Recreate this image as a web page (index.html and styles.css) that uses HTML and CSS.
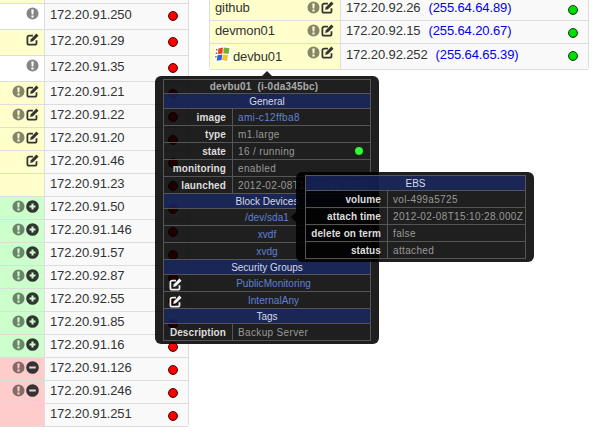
FILE: index.html
```html
<!DOCTYPE html>
<html lang="en">
<head>
    <meta charset="UTF-8">
    <title>Instances</title>
    <link rel="stylesheet" href="styles.css">
</head>
<body>
    <!-- Icon set -->
    <svg class="defs" width="0" height="0">
        <symbol id="i-excl" viewBox="0 0 14 14"><path fill-rule="evenodd" d="M7 .5a6.5 6.5 0 1 0 0 13a6.5 6.5 0 1 0 0-13z M5.7 2.8h2.6l-.4 5.4H6.100z M5.800 9.200h2.400v2.200H5.800z"/></symbol>
        <symbol id="i-plus" viewBox="0 0 14 14"><path fill-rule="evenodd" d="M7 .2a6.800 6.800 0 1 0 0 13.600a6.800 6.800 0 1 0 0-13.600z M5.900 3.800h2.200v2.100h2.100v2.200H8.100v2.100H5.900V8.100H3.800V5.900h2.100z"/></symbol>
        <symbol id="i-minus" viewBox="0 0 14 14"><path fill-rule="evenodd" d="M7 .2a6.800 6.800 0 1 0 0 13.600a6.800 6.800 0 1 0 0-13.600z M3.500 5.900h7v2.200h-7z"/></symbol>
        <symbol id="i-edit" viewBox="0 0 14 14"><path fill="none" stroke="currentColor" stroke-width="1.9" d="M7.500 2.900H3.400a1.900 1.900 0 0 0-1.900 1.900v5.900a1.900 1.900 0 0 0 1.900 1.900h6a1.900 1.900 0 0 0 1.900-1.900V7.800"/><path fill="currentColor" d="M11.200 .6l2.300 2.300-6 6-3.100.8.8-3.100z"/></symbol>
    </svg>

    <div class="page">
        <table class="list left-list">
            <tr class="cut"><td class="flag yellow"></td><td class="ip"></td></tr>
            <tr class="tall"><td class="flag"><svg class="ico grey"><use href="#i-excl"/></svg></td><td class="ip"><span class="dot red"></span>172.20.91.250</td></tr>
            <tr class="tall"><td class="flag yellow"><svg class="ico ink"><use href="#i-edit"/></svg></td><td class="ip"><span class="dot red"></span>172.20.91.29</td></tr>
            <tr class="tall"><td class="flag"><svg class="ico grey"><use href="#i-excl"/></svg></td><td class="ip"><span class="dot red"></span>172.20.91.35</td></tr>
            <tr><td class="flag yellow"><svg class="ico grey"><use href="#i-excl"/></svg><svg class="ico ink"><use href="#i-edit"/></svg></td><td class="ip"><span class="dot red"></span>172.20.91.21</td></tr>
            <tr><td class="flag yellow"><svg class="ico grey"><use href="#i-excl"/></svg><svg class="ico ink"><use href="#i-edit"/></svg></td><td class="ip"><span class="dot red"></span>172.20.91.22</td></tr>
            <tr><td class="flag yellow"><svg class="ico grey"><use href="#i-excl"/></svg><svg class="ico ink"><use href="#i-edit"/></svg></td><td class="ip"><span class="dot red"></span>172.20.91.20</td></tr>
            <tr><td class="flag yellow"><svg class="ico ink"><use href="#i-edit"/></svg></td><td class="ip"><span class="dot red"></span>172.20.91.46</td></tr>
            <tr><td class="flag yellow"></td><td class="ip"><span class="dot red"></span>172.20.91.23</td></tr>
            <tr><td class="flag green"><svg class="ico grey"><use href="#i-excl"/></svg><svg class="ico ink"><use href="#i-plus"/></svg></td><td class="ip"><span class="dot red"></span>172.20.91.50</td></tr>
            <tr><td class="flag green"><svg class="ico grey"><use href="#i-excl"/></svg><svg class="ico ink"><use href="#i-plus"/></svg></td><td class="ip"><span class="dot red"></span>172.20.91.146</td></tr>
            <tr><td class="flag green"><svg class="ico grey"><use href="#i-excl"/></svg><svg class="ico ink"><use href="#i-plus"/></svg></td><td class="ip"><span class="dot red"></span>172.20.91.57</td></tr>
            <tr><td class="flag green"><svg class="ico grey"><use href="#i-excl"/></svg><svg class="ico ink"><use href="#i-plus"/></svg></td><td class="ip"><span class="dot red"></span>172.20.92.87</td></tr>
            <tr><td class="flag green"><svg class="ico grey"><use href="#i-excl"/></svg><svg class="ico ink"><use href="#i-plus"/></svg></td><td class="ip"><span class="dot red"></span>172.20.92.55</td></tr>
            <tr><td class="flag green"><svg class="ico grey"><use href="#i-excl"/></svg><svg class="ico ink"><use href="#i-plus"/></svg></td><td class="ip"><span class="dot red"></span>172.20.91.85</td></tr>
            <tr><td class="flag green"><svg class="ico grey"><use href="#i-excl"/></svg><svg class="ico ink"><use href="#i-plus"/></svg></td><td class="ip"><span class="dot red"></span>172.20.91.16</td></tr>
            <tr><td class="flag pink"><svg class="ico grey"><use href="#i-excl"/></svg><svg class="ico ink"><use href="#i-minus"/></svg></td><td class="ip"><span class="dot red"></span>172.20.91.126</td></tr>
            <tr><td class="flag pink"><svg class="ico grey"><use href="#i-excl"/></svg><svg class="ico ink"><use href="#i-minus"/></svg></td><td class="ip"><span class="dot red"></span>172.20.91.246</td></tr>
            <tr><td class="flag pink"></td><td class="ip"><span class="dot red"></span>172.20.91.251</td></tr>
        </table>

        <table class="list right-list">
            <tr>
                <td class="name yellow"><span class="icons"><svg class="ico grey"><use href="#i-excl"/></svg><svg class="ico ink"><use href="#i-edit"/></svg></span>github</td>
                <td class="ip"><span class="dot lime"></span>172.20.92.26<a class="public">(255.64.64.89)</a></td>
            </tr>
            <tr>
                <td class="name yellow"><span class="icons"><svg class="ico grey"><use href="#i-excl"/></svg><svg class="ico ink"><use href="#i-edit"/></svg></span>devmon01</td>
                <td class="ip"><span class="dot lime"></span>172.20.92.15<a class="public">(255.64.20.67)</a></td>
            </tr>
            <tr class="tall">
                <td class="name yellow"><span class="icons"><svg class="ico grey"><use href="#i-excl"/></svg><svg class="ico ink"><use href="#i-edit"/></svg></span><svg class="winflag" viewBox="0 0 16 16"><rect width="16" height="16" fill="#fff"/><path fill="#e8451f" d="M3.500 2.500l4.500-1-.6 6-4.800.8z"/><path fill="#6cb32c" d="M8.900 1.500l5.600.8-1 5.800-5.300-.8z"/><path fill="#2d62d6" d="M2.500 9.200l4.700-.7-.6 5.500-4.900.8z"/><path fill="#f5c51e" d="M8 8.500l5 .6-1 5.900-5.200-1z"/><path fill="#555" d="M1.200 3h1.200l-.2 1.500H1zM.8 6.500H2l-.2 1.500H.6zM.4 10h1.200l-.2 1.500H.2z"/></svg><span class="host">devbu01</span></td>
                <td class="ip"><span class="dot lime"></span>172.20.92.252<a class="public">(255.64.65.39)</a></td>
            </tr>
        </table>
    </div>

    <!-- Instance popup -->
    <div class="tip tip-instance">
        <table class="tip-table">
            <colgroup><col class="key-col"><col></colgroup>
            <tr><td colspan="2" class="tip-title">devbu01 &nbsp;(i-0da345bc)</td></tr>
            <tr><th colspan="2">General</th></tr>
            <tr><td class="key">image</td><td class="val"><a>ami-c12ffba8</a></td></tr>
            <tr><td class="key">type</td><td class="val">m1.large</td></tr>
            <tr><td class="key">state</td><td class="val"><span class="state-dot"></span>16 / running</td></tr>
            <tr><td class="key">monitoring</td><td class="val">enabled</td></tr>
            <tr><td class="key">launched</td><td class="val">2012-02-08T15:09:53.000Z</td></tr>
            <tr><th colspan="2">Block Devices</th></tr>
            <tr><td colspan="2" class="mid"><a>/dev/sda1</a></td></tr>
            <tr><td colspan="2" class="mid"><a>xvdf</a></td></tr>
            <tr><td colspan="2" class="mid"><a>xvdg</a></td></tr>
            <tr><th colspan="2">Security Groups</th></tr>
            <tr><td colspan="2" class="mid"><svg class="ico light"><use href="#i-edit"/></svg><a>PublicMonitoring</a></td></tr>
            <tr><td colspan="2" class="mid"><svg class="ico light"><use href="#i-edit"/></svg><a>InternalAny</a></td></tr>
            <tr><th colspan="2">Tags</th></tr>
            <tr><td class="key">Description</td><td class="val">Backup Server</td></tr>
        </table>
    </div>

    <!-- Volume popup -->
    <div class="tip tip-volume">
        <table class="tip-table">
            <colgroup><col class="key-col-wide"><col></colgroup>
            <tr><th colspan="2">EBS</th></tr>
            <tr><td class="key">volume</td><td class="val">vol-499a5725</td></tr>
            <tr><td class="key">attach time</td><td class="val">2012-02-08T15:10:28.000Z</td></tr>
            <tr><td class="key">delete on term</td><td class="val">false</td></tr>
            <tr><td class="key">status</td><td class="val">attached</td></tr>
        </table>
    </div>
</body>
</html>
```

FILE: styles.css
```css
/* Page */
html, body {
    margin: 0;
    padding: 0;
    height: 437px;
    overflow: hidden;
    background-color: white;
}

body {
    font-family: "Liberation Sans", Arial, sans-serif;
    font-size: 13px;
    color: #333;
}

.defs {
    display: block;
}

.page {
    display: flex;
    align-items: flex-start;
    gap: 20px;
}

/* Instance lists */
.list {
    border-collapse: separate;
    border-spacing: 0;
    border-right: 1px solid #ddd;
    border-bottom-right-radius: 4px;
    table-layout: fixed;
    letter-spacing: -0.12px;
}

.list td {
    box-sizing: border-box;
    height: 23px;
    padding: 1px 0 0;
    border-bottom: 1px solid #ddd;
    vertical-align: top;
    line-height: 18px;
}

.list tr.tall td {
    height: 26px;
    padding-top: 2px;
}

.list tr.cut td {
    height: 4px;
    padding: 0;
    line-height: 0;
}

.left-list {
    width: 189px;
}

.right-list {
    width: 380px;
    margin-top: -2px;
    border-left: 1px solid #ddd;
    border-bottom-left-radius: 4px;
}

.flag {
    width: 45px;
    text-align: right;
    padding-right: 5px !important;
    border-right: 1px solid #ddd;
    white-space: nowrap;
}

.name {
    width: 131px;
    padding-left: 5px !important;
    padding-right: 6px !important;
    border-right: 1px solid #ddd;
    white-space: nowrap;
}

.icons {
    float: right;
}

.ip {
    background-color: #f9f9f9;
    padding-left: 5px !important;
    padding-right: 10px !important;
    white-space: nowrap;
}

.yellow {
    background-color: #ffffcc;
}

.green {
    background-color: #ccffcc;
}

.pink {
    background-color: #ffcccc;
}

.public {
    margin-left: 8px;
    color: #0000ee;
}

/* Icons */
.ico {
    display: inline-block;
    width: 13px;
    height: 13px;
    margin-left: 1px;
    margin-top: 2px;
    vertical-align: top;
}

.tall .ico {
    margin-top: 1px;
}

.right-list .tall .ico {
    margin-top: 0;
}

.ico.grey {
    fill: rgba(0, 0, 0, 0.48);
}

.ico.ink {
    fill: #333;
    color: #333;
}

.ico.light {
    color: #f2f2f2;
    float: left;
    margin: 0 0 -2px 0;
}

.dot {
    float: right;
    box-sizing: border-box;
    width: 10px;
    height: 10px;
    margin-top: 6px;
    border-radius: 50%;
    border: 1px solid #400;
}

.tall .dot {
    margin-top: 5px;
}

.dot.red {
    background: radial-gradient(circle at 50% 40%, #f00 55%, #b00000);
}

.dot.lime {
    border-color: #040;
    background: radial-gradient(circle at 50% 40%, #0d0 55%, #080);
}

.winflag {
    display: inline-block;
    width: 16px;
    height: 16px;
    vertical-align: top;
}

.host {
    display: inline-block;
    margin: 2px 0 0 2px;
}

/* Popups */
.tip {
    position: absolute;
    box-sizing: border-box;
    border-radius: 6px;
    background-color: rgba(0, 0, 0, 0.88);
}

.tip::before {
    content: "";
    position: absolute;
    border: 5px solid transparent;
}

.tip-instance {
    left: 155px;
    top: 76px;
    width: 224px;
    height: 268px;
    padding: 3px 8px;
}

.tip-instance::before {
    left: 107px;
    top: -10px;
    border-bottom-color: rgba(0, 0, 0, 0.88);
}

.tip-volume {
    left: 296px;
    top: 172px;
    width: 238px;
    height: 90px;
    padding: 3px 8px 3px 9px;
}

.tip-volume::before {
    left: -10px;
    top: 40px;
    border-right-color: rgba(0, 0, 0, 0.88);
}

.tip-table {
    width: 100%;
    border-collapse: collapse;
    table-layout: fixed;
    font-size: 10px;
    letter-spacing: 0.35px;
    color: #999;
}

.key-col {
    width: 69px;
}

.key-col-wide {
    width: 82px;
}

.tip-table th,
.tip-table td {
    padding: 0 5px;
    border: 1px solid #555;
    white-space: nowrap;
}

.tip-table td {
    height: 16px;
}

.tip-table th {
    height: 14px;
    background-color: rgba(25, 42, 105, 0.75);
    color: #d5d9e8;
    font-size: 10px;
    font-weight: normal;
    letter-spacing: 0;
    text-align: center;
}

.tip-table td.tip-title {
    height: 13px;
    padding-right: 11px;
    text-align: center;
    font-weight: bold;
    letter-spacing: 0.2px;
    color: #aaa;
}

.tip-table .key {
    padding: 0 6px 0 0;
    text-align: right;
    font-weight: bold;
    letter-spacing: 0.1px;
    color: #ddd;
}

.tip-table .mid {
    text-align: center;
}

.tip-table a {
    color: #6080d8;
}

.tip-table .mid a {
    letter-spacing: 0.05px;
}

.state-dot {
    float: right;
    width: 8px;
    height: 8px;
    margin: 1px 2px 0 0;
    border-radius: 50%;
    background: radial-gradient(circle at 50% 45%, #3f3 50%, #0b0);
}
```
